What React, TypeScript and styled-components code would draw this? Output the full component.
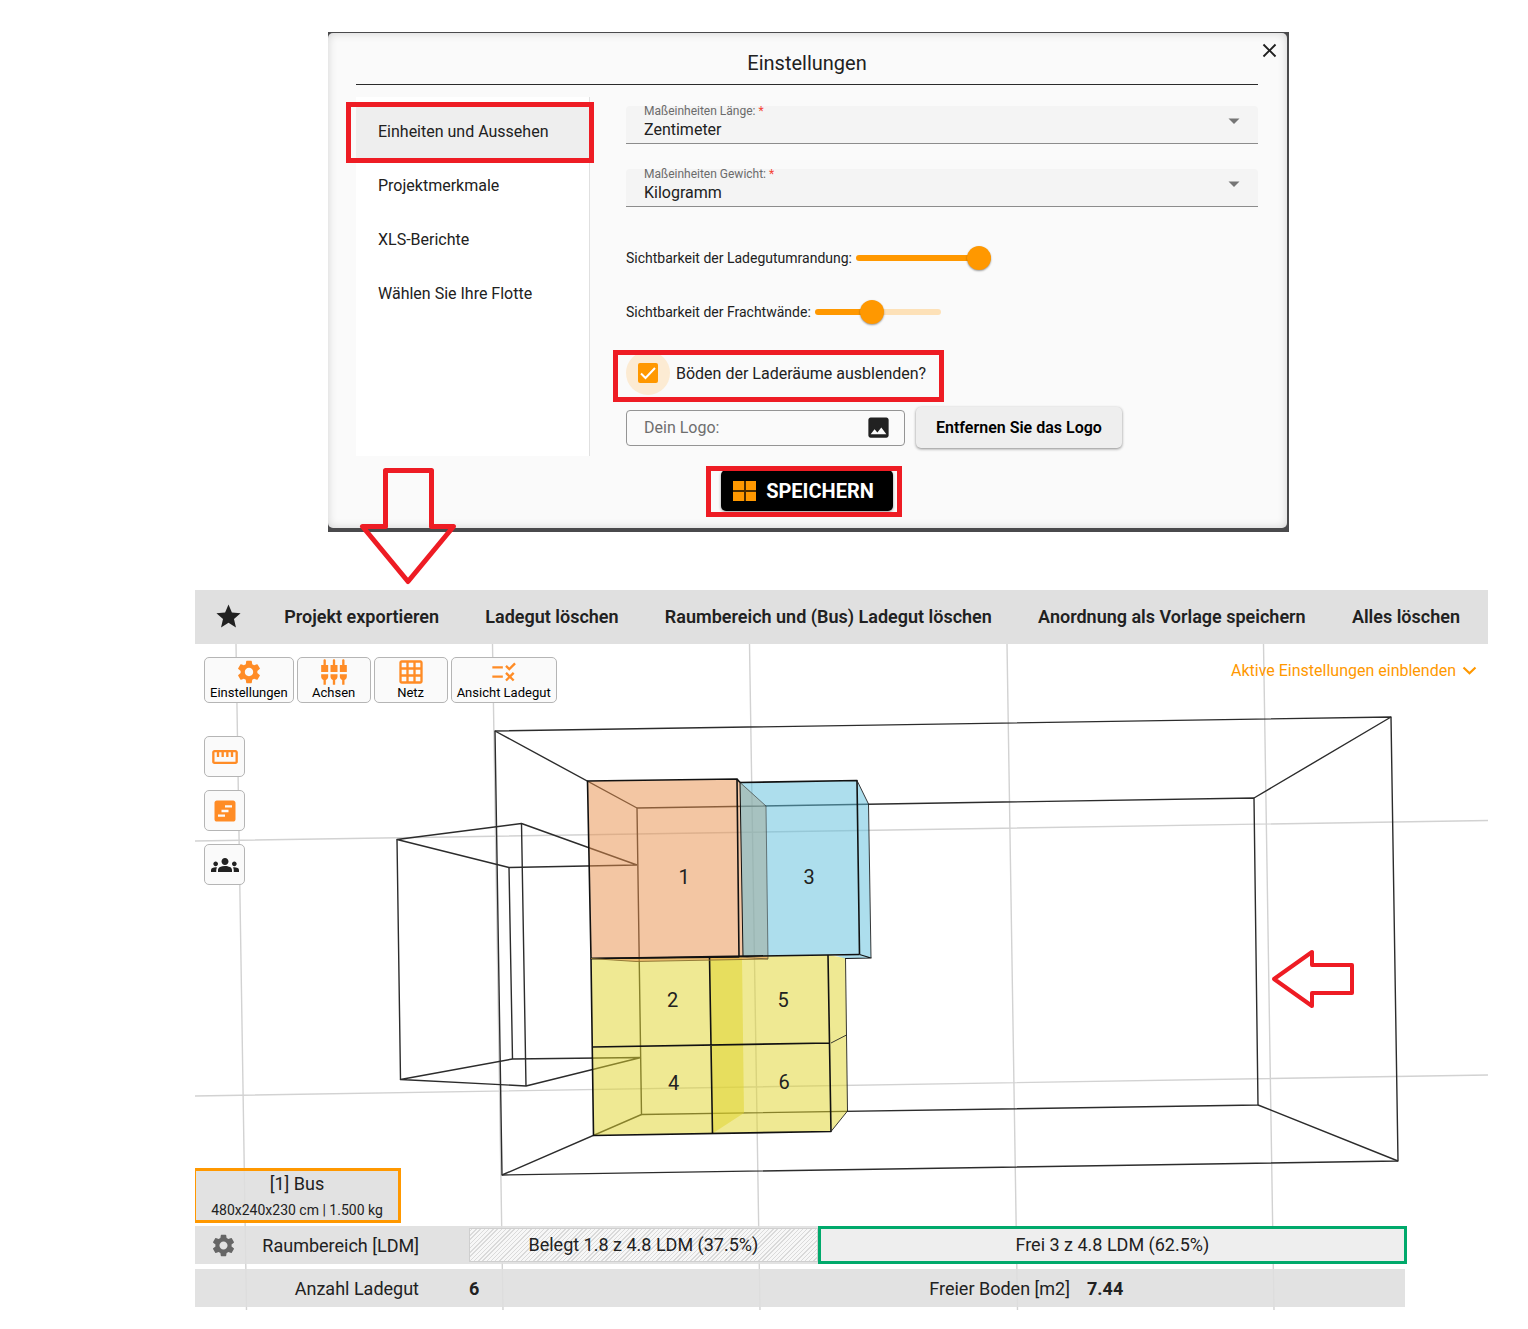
import React, { useState } from "react";
import styled, { createGlobalStyle } from "styled-components";
import {
  MdClose,
  MdGridOn,
  MdGroups,
  MdImage,
  MdRule,
  MdSettings,
  MdSettingsInputComponent,
  MdStar,
  MdStraighten,
  MdViewTimeline,
} from "react-icons/md";

const GlobalStyle = createGlobalStyle`
  * { box-sizing: border-box; }
  body {
    margin: 0;
    background: #fff;
    color: #212121;
    font-family: Roboto, "Liberation Sans", sans-serif;
    font-size: 16px;
  }
  button, input, select { font: inherit; color: inherit; margin: 0; }
  button { cursor: pointer; }
`;

const red = "#ee1c24";
const orange = "#ff9800";
const toolOrange = "#ff8c26";

const Page = styled.main`
  display: flex;
  flex-direction: column;
  gap: 58px;
  padding: 32px 40px 19px 195px;
`;

/* ---------- settings dialog ---------- */

const DialogFrame = styled.section`
  position: relative;
  margin: 0 199px 0 133px;
  padding: 1px 2px 4px 0;
  background: #4a4a4c;
`;

const Dialog = styled.div`
  position: relative;
  padding: 18px 29px 17px 28px;
  border-radius: 5px;
  background: #fafafa;
  box-shadow: inset 0 0 10px rgba(0, 0, 0, 0.16);
`;

const DialogTitle = styled.h1`
  margin: 0;
  padding-bottom: 9px;
  border-bottom: 1px solid #2b2b2b;
  font-size: 20px;
  font-weight: 400;
  line-height: 24px;
  text-align: center;
`;

const CloseButton = styled.button`
  position: absolute;
  top: 6px;
  right: 6px;
  display: flex;
  padding: 0;
  border: 0;
  background: none;
`;

const DialogBody = styled.div`
  display: grid;
  grid-template-columns: 234px 1fr;
  gap: 36px;
  margin-top: 12px;
`;

const Sidebar = styled.nav`
  padding-top: 8px;
  border-right: 1px solid #e0e0e0;
  background: #fff;
`;

const SideItem = styled.button<{ $active?: boolean }>`
  position: relative;
  display: block;
  width: 100%;
  height: 54px;
  padding: 0 0 2px 22px;
  border: 0;
  background: ${(p) => (p.$active ? "#eeeeee" : "transparent")};
  text-align: left;
`;

const Marker = styled.span<{ $inset: string }>`
  position: absolute;
  inset: ${(p) => p.$inset};
  border: 5px solid ${red};
  pointer-events: none;
`;

const Form = styled.form`
  display: flex;
  flex-direction: column;
  padding: 9px 0 8px;
`;

const Field = styled.div`
  display: grid;
  grid-template-columns: 1fr auto;
  grid-template-rows: 10px 27px;
  height: 38px;
  margin-bottom: 25px;
  padding: 0 18px;
  border-bottom: 1px solid #8c8c8c;
  border-radius: 4px 4px 0 0;
  background: #f4f4f4;
`;

const FieldLabel = styled.label`
  color: #6b6b6b;
  font-size: 12px;
  line-height: 10px;

  span { color: #f44336; }
`;

const FieldSelect = styled.select`
  grid-row: 2;
  padding: 0;
  border: 0;
  outline: 0;
  background: none;
  appearance: none;
`;

const FieldArrow = styled.svg`
  grid-column: 2;
  grid-row: 1 / 3;
  align-self: center;
  margin-bottom: 8px;
`;

const SliderRow = styled.div`
  display: flex;
  align-items: center;
  gap: 4px;
  height: 24px;
  margin-bottom: 30px;
  font-size: 14px;
`;

const Sliders = styled.div`
  margin-top: 14px;
  margin-bottom: -3px;
`;

const Slider = styled.input<{ $width: number; $fill: number }>`
  width: ${(p) => p.$width}px;
  height: 24px;
  background: none;
  appearance: none;

  &::-webkit-slider-runnable-track {
    height: 6px;
    border-radius: 3px;
    background: linear-gradient(
      to right,
      ${orange} ${(p) => p.$fill}%,
      #fde1b8 ${(p) => p.$fill}%
    );
  }
  &::-webkit-slider-thumb {
    width: 24px;
    height: 24px;
    margin-top: -9px;
    border-radius: 50%;
    background: ${orange};
    box-shadow: 0 1px 2px rgba(0, 0, 0, 0.4);
    appearance: none;
  }
`;

const CheckRow = styled.div`
  position: relative;
  display: flex;
  align-items: center;
  align-self: flex-start;
  gap: 6px;
  height: 44px;
  margin-bottom: 12px;
`;

const Halo = styled.span`
  display: grid;
  place-items: center;
  width: 44px;
  height: 44px;
  border-radius: 50%;
  background: #fcebd3;
`;

const CheckBox = styled.input`
  grid-area: 1 / 1;
  width: 20px;
  height: 20px;
  border-radius: 2px;
  background: ${orange};
  appearance: none;
`;

const Tick = styled.svg`
  grid-area: 1 / 1;
  pointer-events: none;
`;

const LogoRow = styled.div`
  display: flex;
  align-items: center;
  gap: 11px;
`;

const LogoField = styled.label`
  display: flex;
  align-items: center;
  width: 279px;
  height: 36px;
  padding: 0 12px 0 17px;
  border: 1px solid #949494;
  border-radius: 4px;
`;

const LogoInput = styled.input`
  flex: 1;
  min-width: 0;
  padding: 0;
  border: 0;
  outline: 0;
  background: none;

  &::placeholder { color: #6e6e6e; opacity: 1; }
`;

const RemoveButton = styled.button`
  height: 41px;
  padding: 0 20px;
  border: 0;
  border-radius: 5px;
  background: #eeeeee;
  color: #000;
  font-weight: 600;
  box-shadow: 0 1px 3px rgba(0, 0, 0, 0.45);
`;

const Footer = styled.footer`
  display: flex;
  justify-content: center;
  margin-top: 14px;
`;

const SaveButton = styled.button`
  position: relative;
  display: flex;
  align-items: center;
  gap: 10px;
  height: 41px;
  padding: 0 19px 0 12px;
  border: 0;
  border-radius: 5px;
  background: #000;
  color: #fff;
  font-size: 20px;
  font-weight: 700;
  box-shadow: 0 1px 3px rgba(0, 0, 0, 0.4);
`;

const DownArrow = styled.svg`
  position: absolute;
  top: 434px;
  left: 30px;
  pointer-events: none;
`;

/* ---------- load planner ---------- */

const Toolbar = styled.nav`
  display: flex;
  align-items: center;
  justify-content: space-between;
  height: 54px;
  padding: 0 28px 2px 19px;
  background: #e0e0e0;
`;

const ToolbarButton = styled.button`
  display: flex;
  padding: 0;
  border: 0;
  background: none;
  font-size: 18px;
  font-weight: 600;
  white-space: nowrap;

  &:first-child { margin-right: -5px; }
`;

const Stage = styled.div`
  display: grid;
`;

const Scene = styled.svg`
  grid-area: 1 / 1;
  display: block;
  width: 100%;
  height: auto;
  font-size: 20px;
`;

const Overlay = styled.div`
  z-index: 1;
  grid-area: 1 / 1;
  display: flex;
  flex-direction: column;
  padding-bottom: 3px;
`;

const TopTools = styled.div`
  display: flex;
  align-items: flex-start;
  gap: 3px;
  padding: 13px 11px 0 9px;
`;

const ToolButton = styled.button`
  display: flex;
  flex-direction: column;
  align-items: center;
  min-width: 74px;
  height: 46px;
  padding: 0 5px;
  border: 1px solid #b5b5b5;
  border-radius: 5px;
  background: #fafafa;
  color: #000;
  font-size: 13px;
  line-height: 14px;

  svg { color: ${toolOrange}; }
`;

const ActiveToggle = styled.button`
  display: flex;
  align-items: center;
  gap: 6px;
  margin-left: auto;
  padding: 4px 0 0;
  border: 0;
  background: none;
  color: ${orange};
`;

const SideTools = styled.div`
  display: flex;
  flex-direction: column;
  gap: 13px;
  width: 41px;
  margin: 33px 0 auto 9px;
`;

const SideTool = styled.button<{ $dark?: boolean }>`
  display: grid;
  place-items: center;
  height: 41px;
  padding: 0;
  border: 1px solid #b5b5b5;
  border-radius: 5px;
  background: #fafafa;
  color: ${(p) => (p.$dark ? "#212121" : toolOrange)};
`;

const panel = "rgba(222, 222, 222, 0.88)";

const SpaceTab = styled.button`
  display: flex;
  flex-direction: column;
  align-items: center;
  align-self: flex-start;
  width: 206px;
  height: 55px;
  padding: 2px 0 0;
  border: 3px solid ${orange};
  border-left-width: 1px;
  background: ${panel};
  font-size: 18px;
  line-height: 22px;

  small { margin-top: 5px; font-size: 14px; line-height: 20px; }
`;

const SummaryRow = styled.div`
  display: flex;
  align-items: center;
  height: 38px;
  margin: 3px 83px 0 0;
  background: ${panel};
  font-size: 18px;

  & + & { margin-top: 5px; }
`;

const RowIcon = styled.button`
  display: flex;
  padding: 0 0 0 15px;
  border: 0;
  background: none;
  color: #666;
`;

const RowLabel = styled.span<{ $width?: number }>`
  flex: 1 0 ${(p) => p.$width ?? 0}px;
  max-width: ${(p) => (p.$width ? `${p.$width}px` : "none")};
  text-align: right;
`;

const LabelCell = styled.div`
  display: flex;
  align-items: center;
  width: 224px;
`;

const LdmBar = styled.div`
  display: grid;
  grid-template-columns: 348fr 588fr;
  align-items: center;
  flex: 1;
  margin: 0 -2px 0 50px;
  text-align: center;
`;

const Used = styled.div`
  height: 34px;
  border: 1px solid #cfcfcf;
  background: repeating-linear-gradient(
    -45deg,
    #f7f7f7 0 2px,
    #dadada 2px 3px
  );
  line-height: 32px;
`;

const Free = styled.div`
  height: 38px;
  border: 3px solid #00a96b;
  background: #eeeeee;
  line-height: 32px;
`;

const Metric = styled.div<{ $gap: number }>`
  display: flex;
  flex: 1;
  gap: ${(p) => p.$gap}px;

  strong { font-weight: 700; }
`;

const fields = [
  { id: "length", label: "Maßeinheiten Länge:", options: ["Zentimeter"] },
  { id: "weight", label: "Maßeinheiten Gewicht:", options: ["Kilogramm"] },
];

const numbers: [string, number, number][] = [
  ["1", 684, 884],
  ["3", 809, 884],
  ["2", 672.5, 1007],
  ["5", 783, 1007],
  ["4", 673.5, 1090],
  ["6", 784, 1089],
];

const peach = "rgba(231,143,75,0.51)";
const sky = "rgba(94,190,220,0.51)";
const lemon = "rgba(223,212,43,0.51)";

function LoadScene() {
  return (
    <Scene viewBox="195 644 1293 666" role="img" aria-label="Ladeplan">
      <g stroke="#d2d2d2" strokeWidth="1.4">
        <path d="M236 644L246.500 1310M492.500 644L503 1310M749.500 644L760 1310M1007 644L1017.500 1310M1263.500 644L1274 1310" />
        <path d="M195 841L1488 820.500M195 1096L1488 1075" />
      </g>
      <g fill="none" stroke="#2c2c2c" strokeWidth="1.4" strokeLinejoin="round">
        <path d="M495 731L1391 717L1398 1161L502 1175Z" />
        <path d="M637 808L1254 798L1258 1105L641.500 1114.500Z" />
        <path d="M495 731L637 808M1391 717L1254 798M1398 1161L1258 1105M502 1175L641.500 1114.500" />
        <path d="M637 865L509 867.500L397 839.500L521.500 823.500L637 865" />
        <path d="M641 1057.500L512.500 1059L400.500 1079.500L526 1086L641 1057.500" />
        <path d="M397 839.500L400.500 1079.500M509 867.500L512.500 1059M521.500 823.500L526 1086" />
      </g>
      <g fill={lemon}>
        <path d="M591 958.500L709.500 956.500L712.500 1133.500L593.500 1135.500Z" />
        <path d="M709.500 956.500L742 957L744 1113L712.500 1133.500Z" />
        <path d="M709.500 956.500L828 955L831 1131.500L712.500 1133.500Z" />
        <path d="M828 955L845.500 958L847.500 1111L831 1131.500Z" />
      </g>
      <g fill={peach}>
        <path d="M587.500 781L737 779L740 957L591 958.500Z" />
        <path d="M737 779L766 806L768 959L740 957Z" />
        <path d="M591 958.500L740 957L768 959L636 961.500Z" />
      </g>
      <g fill={sky}>
        <path d="M740 782.500L857 780.500L859.500 954.500L743 956.500Z" />
        <path d="M857 780.500L868.500 804L871 958L859.500 954.500Z" />
        <path d="M835 955.500L859.500 954.500L871 958L845 958.500Z" />
      </g>
      <g fill="none" stroke="#111" strokeWidth="1.6" strokeLinejoin="round">
        <path d="M587.500 781L737 779L739 957L591 958.500Z" />
        <path d="M740 782.500L857 780.500L859.500 954.500" />
        <path d="M740 782.500L743 956.500" strokeWidth="1" />
        <path d="M737 779L740 782.500" />
        <path d="M591 958.500L859.500 954.500M828 955L831 1131.500L593.500 1135.500L591 958.500M709.500 956.500L712.500 1133.500M592.500 1047L830 1043" />
        <path d="M859.500 954.500L871 958L845 958.500" strokeWidth="1.2" />
      </g>
      <g fill="none" stroke="#222" strokeWidth="0.9">
        <path d="M740 782.500L766 806L768 959L740 957" opacity="0.6" />
        <path d="M857 780.500L868.500 804L871 958" />
        <path d="M845.500 958L847.500 1111L831 1131.500M831 1043L846.500 1035" />
        <path d="M591 958.500L636 961.500L768 959" stroke="#8a7030" />
      </g>
      <g fill="#212121" textAnchor="middle">
        {numbers.map(([n, x, y]) => (
          <text key={n} x={x} y={y}>
            {n}
          </text>
        ))}
      </g>
      <path
        d="M1274 979L1312 952V965H1352V993H1312V1006Z"
        fill="none"
        stroke={red}
        strokeWidth="4"
        strokeLinejoin="round"
      />
    </Scene>
  );
}

export default function App() {
  const [border, setBorder] = useState(100);
  const [walls, setWalls] = useState(44);
  const [hidden, setHidden] = useState(true);

  return (
    <>
      <GlobalStyle />
      <Page>
        <DialogFrame>
          <Dialog role="dialog" aria-labelledby="settings-title">
            <DialogTitle id="settings-title">Einstellungen</DialogTitle>
            <CloseButton aria-label="Schließen">
              <MdClose size={23} />
            </CloseButton>
            <DialogBody>
              <Sidebar>
                <SideItem $active>
                  Einheiten und Aussehen
                  <Marker $inset="-3px -5px -4px -10px" />
                </SideItem>
                <SideItem>Projektmerkmale</SideItem>
                <SideItem>XLS-Berichte</SideItem>
                <SideItem>Wählen Sie Ihre Flotte</SideItem>
              </Sidebar>
              <Form onSubmit={(e) => e.preventDefault()}>
                {fields.map((f) => (
                  <Field key={f.id}>
                    <FieldLabel htmlFor={f.id}>
                      {f.label} <span>*</span>
                    </FieldLabel>
                    <FieldSelect id={f.id}>
                      {f.options.map((o) => (
                        <option key={o}>{o}</option>
                      ))}
                    </FieldSelect>
                    <FieldArrow width="12" height="6" viewBox="0 0 12 6">
                      <path d="M0.500 0.500H11.500L6 6Z" fill="#757575" />
                    </FieldArrow>
                  </Field>
                ))}
                <Sliders>
                  <SliderRow>
                    <label htmlFor="edge">Sichtbarkeit der Ladegutumrandung:</label>
                    <Slider
                      id="edge"
                      type="range"
                      $width={135}
                      $fill={border}
                      value={border}
                      onChange={(e) => setBorder(Number(e.target.value))}
                    />
                  </SliderRow>
                  <SliderRow>
                    <label htmlFor="walls">Sichtbarkeit der Frachtwände:</label>
                    <Slider
                      id="walls"
                      type="range"
                      $width={126}
                      $fill={walls}
                      value={walls}
                      onChange={(e) => setWalls(Number(e.target.value))}
                    />
                  </SliderRow>
                </Sliders>
                <CheckRow>
                  <Halo>
                    <CheckBox
                      id="floors"
                      type="checkbox"
                      checked={hidden}
                      onChange={(e) => setHidden(e.target.checked)}
                    />
                    {hidden && (
                      <Tick width="20" height="20" viewBox="0 0 20 20">
                        <path d="M3 10.500L7.500 15L17 5" fill="none" stroke="#fff" strokeWidth="2" />
                      </Tick>
                    )}
                  </Halo>
                  <label htmlFor="floors">Böden der Laderäume ausblenden?</label>
                  <Marker $inset="-1px -18px -7px -13px" />
                </CheckRow>
                <LogoRow>
                  <LogoField>
                    <LogoInput placeholder="Dein Logo:" aria-label="Dein Logo:" />
                    <MdImage size={27} />
                  </LogoField>
                  <RemoveButton type="button">Entfernen Sie das Logo</RemoveButton>
                </LogoRow>
              </Form>
            </DialogBody>
            <Footer>
              <SaveButton>
                <svg width="23" height="20" viewBox="0 0 23 20">
                  <path d="M0 0H23V20H0Z" fill="#4a2c00" />
                  <path d="M0 0H11V9H0ZM13 0H23V9H13ZM0 11H11V20H0ZM13 11H23V20H13Z" fill={orange} />
                </svg>
                SPEICHERN
                <Marker $inset="-4px -9px -6px -15px" />
              </SaveButton>
            </Footer>
          </Dialog>
          <DownArrow width="100" height="120" viewBox="358 466 100 120">
            <path
              d="M385.500 470.500H431.500V526.500H453.500L408 581.500L362.500 526.500H385.500Z"
              fill="none"
              stroke={red}
              strokeWidth="5"
              strokeLinejoin="round"
            />
          </DownArrow>
        </DialogFrame>

        <section>
          <Toolbar>
            <ToolbarButton aria-label="Favoriten">
              <MdStar size={29} />
            </ToolbarButton>
            <ToolbarButton>Projekt exportieren</ToolbarButton>
            <ToolbarButton>Ladegut löschen</ToolbarButton>
            <ToolbarButton>Raumbereich und (Bus) Ladegut löschen</ToolbarButton>
            <ToolbarButton>Anordnung als Vorlage speichern</ToolbarButton>
            <ToolbarButton>Alles löschen</ToolbarButton>
          </Toolbar>
          <Stage>
            <LoadScene />
            <Overlay>
              <TopTools>
                <ToolButton>
                  <MdSettings size={28} />
                  Einstellungen
                </ToolButton>
                <ToolButton>
                  <MdSettingsInputComponent size={28} />
                  Achsen
                </ToolButton>
                <ToolButton>
                  <MdGridOn size={28} />
                  Netz
                </ToolButton>
                <ToolButton>
                  <MdRule size={28} />
                  Ansicht Ladegut
                </ToolButton>
                <ActiveToggle>
                  Aktive Einstellungen einblenden
                  <svg width="15" height="9" viewBox="0 0 15 9">
                    <path d="M1.500 1.500L7.500 7.200L13.500 1.500" fill="none" stroke="currentColor" strokeWidth="2.200" />
                  </svg>
                </ActiveToggle>
              </TopTools>
              <SideTools>
                <SideTool aria-label="Messen">
                  <MdStraighten size={28} />
                </SideTool>
                <SideTool aria-label="Zeitplan">
                  <MdViewTimeline size={28} />
                </SideTool>
                <SideTool $dark aria-label="Gruppen">
                  <MdGroups size={28} />
                </SideTool>
              </SideTools>
              <SpaceTab>
                [1] Bus
                <small>480x240x230 cm | 1.500 kg</small>
              </SpaceTab>
              <SummaryRow>
                <LabelCell>
                  <RowIcon aria-label="Raum einstellen">
                    <MdSettings size={27} />
                  </RowIcon>
                  <RowLabel>Raumbereich [LDM]</RowLabel>
                </LabelCell>
                <LdmBar>
                  <Used>Belegt 1.8 z 4.8 LDM (37.5%)</Used>
                  <Free>Frei 3 z 4.8 LDM (62.5%)</Free>
                </LdmBar>
              </SummaryRow>
              <SummaryRow>
                <Metric $gap={50}>
                  <RowLabel $width={224}>Anzahl Ladegut</RowLabel>
                  <strong>6</strong>
                </Metric>
                <Metric $gap={17}>
                  <RowLabel $width={270}>Freier Boden [m2]</RowLabel>
                  <strong>7.44</strong>
                </Metric>
              </SummaryRow>
            </Overlay>
          </Stage>
        </section>
      </Page>
    </>
  );
}
